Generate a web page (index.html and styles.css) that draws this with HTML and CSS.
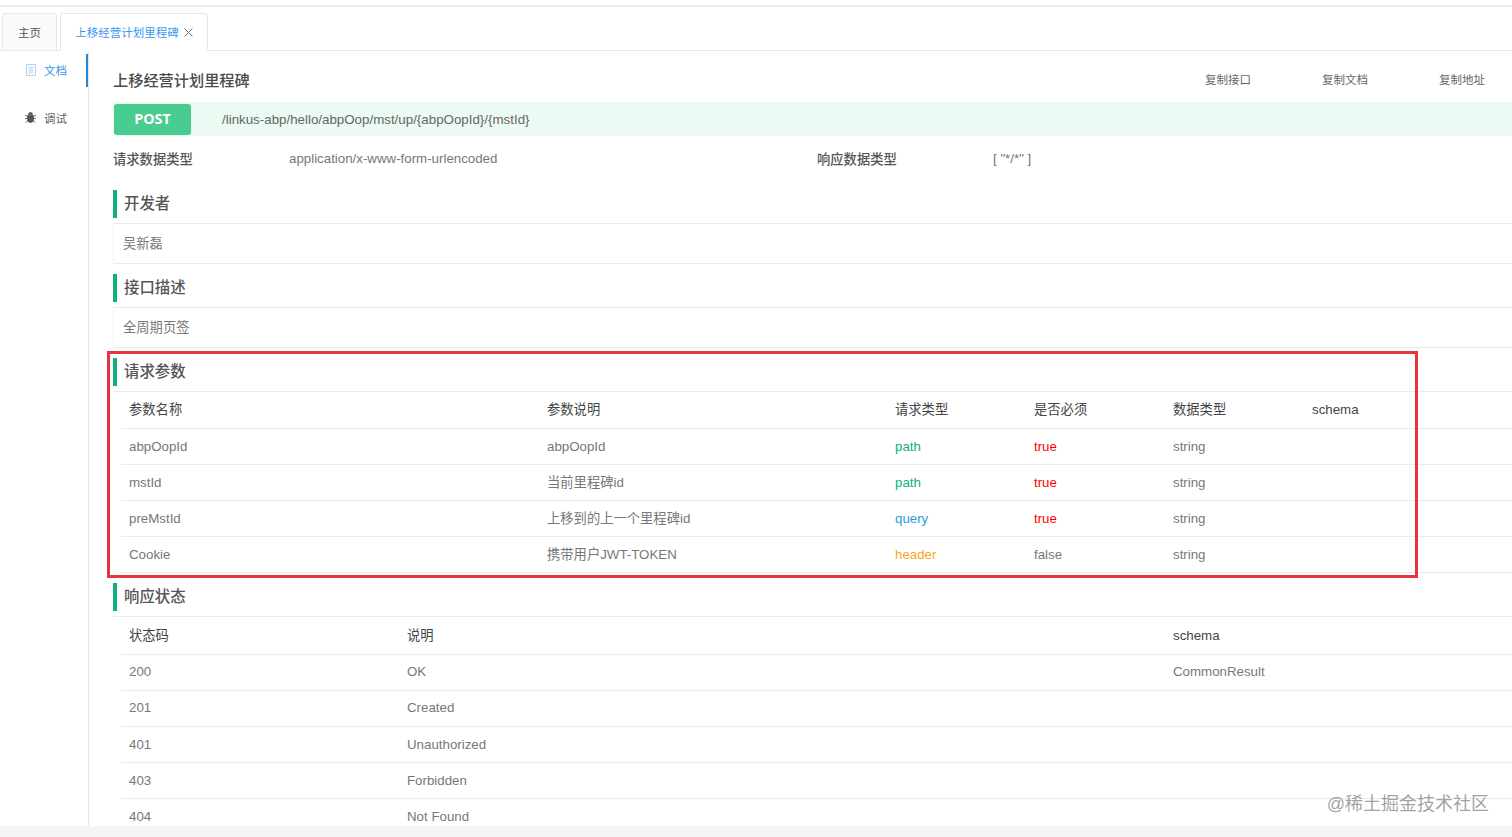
FILE: index.html
```html
<!DOCTYPE html>
<html lang="zh-CN">
<head>
    <meta charset="UTF-8">
    <title>上移经营计划里程碑</title>
    <link rel="stylesheet" href="styles.css">
</head>
<body>
    <div class="top-line"></div>
    <div class="tabs">
        <div class="tab">主页</div>
        <div class="tab tab-active">上移经营计划里程碑
            <svg class="tab-close" width="9" height="9" viewBox="0 0 9 9"><path d="M.5.5l8 8M8.500.5l-8 8" stroke="#777" fill="none"/></svg>
        </div>
    </div>
    <div class="layout">
        <div class="sidebar">
            <div class="side-item side-active">
                <svg width="10" height="12" viewBox="0 0 10 12"><path d="M.5.5h9v11h-9zM2.500 3h5M2.500 5h5M2.500 7h5M2.500 9h5" stroke="#a9d3f5" fill="none"/></svg>
                文档
            </div>
            <div class="side-item">
                <svg width="11" height="11" viewBox="0 0 11 11"><path d="M3.500 2.500a2 2 0 0 1 4 0zM2.500 3.500h6v4a3 3 0 0 1-6 0zM0 3l2.500 1.500M11 3L8.500 4.500M0 6.500h2.500M11 6.500H8.500M.5 10.500l2.500-2M10.500 10.500l-2.500-2" fill="#555" stroke="#555" stroke-width=".8"/></svg>
                调试
            </div>
        </div>
        <div class="main">
            <div class="title-row">
                <div class="page-title">上移经营计划里程碑</div>
                <div class="copy-links">
                    <span>复制接口</span>
                    <span>复制文档</span>
                    <span>复制地址</span>
                </div>
            </div>
            <div class="url-bar">
                <div class="method">POST</div>
                <div class="url">/linkus-abp/hello/abpOop/mst/up/{abpOopId}/{mstId}</div>
            </div>
            <div class="meta-row">
                <div class="meta-label">请求数据类型</div>
                <div class="meta-value">application/x-www-form-urlencoded</div>
                <div class="meta-label">响应数据类型</div>
                <div class="meta-value">[ "*/*" ]</div>
            </div>

            <div class="section-title"><span class="mark"></span>开发者</div>
            <div class="section-text">吴新磊</div>

            <div class="section-title"><span class="mark"></span>接口描述</div>
            <div class="section-text">全周期页签</div>

            <div class="section-title"><span class="mark"></span>请求参数</div>
            <div class="table-wrap">
                <div class="row params-row head">
                    <div>参数名称</div><div>参数说明</div><div>请求类型</div><div>是否必须</div><div>数据类型</div><div>schema</div>
                </div>
                <div class="row params-row">
                    <div>abpOopId</div><div>abpOopId</div><div class="green">path</div><div class="red">true</div><div>string</div><div></div>
                </div>
                <div class="row params-row">
                    <div>mstId</div><div>当前里程碑id</div><div class="green">path</div><div class="red">true</div><div>string</div><div></div>
                </div>
                <div class="row params-row">
                    <div>preMstId</div><div>上移到的上一个里程碑id</div><div class="blue">query</div><div class="red">true</div><div>string</div><div></div>
                </div>
                <div class="row params-row">
                    <div>Cookie</div><div>携带用户JWT-TOKEN</div><div class="orange">header</div><div>false</div><div>string</div><div></div>
                </div>
            </div>

            <div class="section-title"><span class="mark"></span>响应状态</div>
            <div class="table-wrap status-table">
                <div class="row status-row head">
                    <div>状态码</div><div>说明</div><div>schema</div>
                </div>
                <div class="row status-row">
                    <div>200</div><div>OK</div><div>CommonResult</div>
                </div>
                <div class="row status-row">
                    <div>201</div><div>Created</div><div></div>
                </div>
                <div class="row status-row">
                    <div>401</div><div>Unauthorized</div><div></div>
                </div>
                <div class="row status-row">
                    <div>403</div><div>Forbidden</div><div></div>
                </div>
                <div class="row status-row">
                    <div>404</div><div>Not Found</div><div></div>
                </div>
            </div>
        </div>
    </div>
    <div class="bottom-strip"></div>
    <div class="red-box"></div>
    <div class="watermark">@稀土掘金技术社区</div>
</body>
</html>
```

FILE: styles.css
```css
* {
    box-sizing: border-box;
    font-family: "Liberation Sans", "Noto Sans CJK SC", sans-serif;
}
html, body {
    margin: 0;
    height: 837px;
    overflow: hidden;
    background-color: #fff;
}
body {
    display: flex;
    flex-direction: column;
    position: relative;
}
.top-line {
    height: 8px;
    margin-top: 5px;
    border-top: 2px solid #eee;
    flex: none;
}
.tabs {
    display: flex;
    height: 38px;
    padding-left: 2px;
    gap: 3px;
    border-bottom: 1px solid #e8e8e8;
    flex: none;
}
.tab {
    width: 55px;
    height: 38px;
    background-color: #fafafa;
    border: 1px solid #e8e8e8;
    border-radius: 3px 3px 0 0;
    font-size: 11.500px;
    color: #555;
    display: flex;
    align-items: center;
    justify-content: center;
}
.tab-active {
    width: 148px;
    background-color: #fff;
    border-bottom-color: #fff;
    color: #3b97ec;
    gap: 5px;
}
.layout {
    flex: 1;
    min-height: 0;
    display: flex;
}
.sidebar {
    width: 89px;
    flex: none;
    border-right: 1px solid #e8e8e8;
    padding-top: 3px;
}
.side-item {
    height: 33px;
    margin-bottom: 15px;
    padding-bottom: 2px;
    display: flex;
    align-items: center;
    justify-content: flex-end;
    gap: 8px;
    padding-right: 21px;
    font-size: 11.500px;
    color: #666;
}
.side-active {
    color: #3b97ec;
    border-right: 2px solid #1b8ad8;
    padding-right: 19px;
}
.main {
    flex: 1;
    min-width: 0;
    padding-left: 24px;
    overflow: hidden;
}
.title-row {
    height: 51px;
    display: flex;
    align-items: center;
    justify-content: space-between;
    padding-top: 5px;
}
.page-title {
    font-size: 15.200px;
    font-weight: 500;
    color: #4a4a4a;
}
.copy-links {
    display: flex;
    gap: 71px;
    padding-right: 27px;
    font-size: 11.500px;
    color: #666;
}
.url-bar {
    height: 34px;
    background-color: #ebfaf3;
    display: flex;
    align-items: center;
    padding-left: 1px;
}
.method {
    width: 77px;
    height: 31px;
    padding-bottom: 2px;
    background-color: #49cc90;
    border-radius: 3px;
    color: #fff;
    font-weight: bold;
    font-size: 14.300px;
    font-family: "Open Sans", sans-serif;
    display: flex;
    align-items: center;
    justify-content: center;
}
.url {
    margin-left: 31px;
    font-size: 13.330px;
    color: #666;
}
.meta-row {
    height: 44px;
    display: grid;
    grid-template-columns: 176px 528px 176px 1fr;
    align-items: center;
    font-size: 13.300px;
    color: #777;
}
.meta-label {
    font-weight: 500;
    color: #555;
}
.section-title {
    height: 34px;
    margin-top: 10px;
    border-bottom: 1px solid #ebebeb;
    display: flex;
    align-items: flex-start;
    font-size: 15.400px;
    font-weight: 500;
    line-height: 28px;
    color: #555;
}
.mark {
    width: 4px;
    height: 28px;
    margin-right: 7px;
    background-color: #10af7e;
}
.section-text {
    height: 40px;
    padding-left: 9px;
    border-bottom: 1px solid #ebebeb;
    border-left: 1px solid #f3f3f3;
    font-size: 13.300px;
    line-height: 39px;
    color: #777;
}
.table-wrap {
    margin-left: 8px;
}
.status-table {
    padding-top: 1px;
}
.row {
    display: grid;
    height: 36.200px;
    align-items: center;
    padding-left: 8px;
    border-bottom: 1px solid #ebebeb;
    font-size: 13.300px;
    line-height: 18px;
    color: #777;
}
.params-row {
    height: 36.100px;
    grid-template-columns: 418px 348px 139px 139px 139px 1fr;
}
.params-row.head {
    height: 37px;
}
.status-row {
    grid-template-columns: 278px 766px 1fr;
}
.head {
    color: #444;
}
.green { color: #10af7e; }
.red { color: #f00; }
.blue { color: #2d9cdb; }
.orange { color: #f8a51f; }
.bottom-strip {
    height: 11px;
    flex: none;
    background-color: #f4f4f5;
}
/* annotation drawn over the screenshot */
.red-box {
    position: absolute;
    left: 107px;
    top: 351px;
    width: 1311px;
    height: 227px;
    border: 3px solid #e8323c;
}
.watermark {
    position: absolute;
    right: 23px;
    top: 789px;
    font-size: 18px;
    color: rgba(120, 120, 120, 0.7);
}
```
